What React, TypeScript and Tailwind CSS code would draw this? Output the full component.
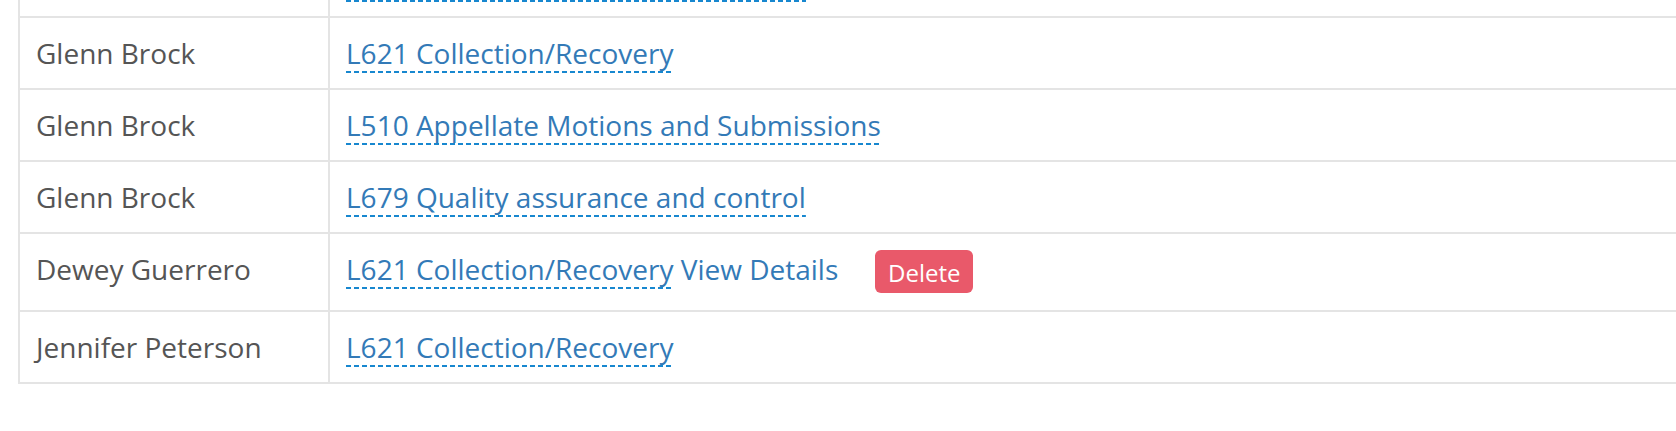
import React from "react";

type Entry = {
    name: string;
    task: string;
    details?: boolean;
};

const entries: Entry[] = [
    { name: "Glenn Brock", task: "L621 Collection/Recovery" },
    { name: "Glenn Brock", task: "L510 Appellate Motions and Submissions" },
    { name: "Glenn Brock", task: "L679 Quality assurance and control" },
    { name: "Dewey Guerrero", task: "L621 Collection/Recovery", details: true },
    { name: "Jennifer Peterson", task: "L621 Collection/Recovery" },
];

const dashes =
    "bg-[image:repeating-linear-gradient(90deg,#1787cf_0px,#1787cf_5px,transparent_5px,transparent_8px)] bg-no-repeat bg-[length:100%_2px]";

const EditableTask: React.FC<{ text: string }> = ({ text }) => (
    <span className={`inline-block leading-[34px] pb-[3px] bg-bottom ${dashes}`}>{text}</span>
);

export const App: React.FC = () => {
    return (
        <div className="w-full h-[431px] overflow-hidden bg-white font-['Open_Sans',sans-serif] text-[28px] leading-[40px]">
            <div className="ml-[18px] w-[1700px] border-l-2 border-[#e4e4e4]">
                {/* tail of the row scrolled above the view: only its underline shows */}
                <div className="flex h-[18px] border-b-2 border-[#e4e4e4]">
                    <div className="w-[310px] shrink-0 border-r-2 border-[#e4e4e4]" />
                    <div className="px-4">
                        <div className={`w-[460px] h-[2px] bg-top ${dashes}`} />
                    </div>
                </div>
                {entries.map((entry, i) => (
                    <div key={i} className={`flex border-b-2 border-[#e4e4e4] ${entry.details ? "h-[78px]" : "h-[72px]"}`}>
                        <div className="w-[310px] shrink-0 border-r-2 border-[#e4e4e4] px-4 pt-[15px] text-[#555555]">
                            {entry.name}
                        </div>
                        <div className="px-4 pt-[15px] text-[#337ab7] whitespace-nowrap">
                            <EditableTask text={entry.task} />
                            {entry.details && (
                                <>
                                    {" "}View Details
                                    <span className="ml-[37px] inline-flex items-center justify-center align-top mt-[1px] pt-[2px] h-[43px] w-[98px] rounded-[6px] bg-[#e9596a] text-[24px] leading-[32px] text-white">
                                        Delete
                                    </span>
                                </>
                            )}
                        </div>
                    </div>
                ))}
            </div>
        </div>
    );
};

export default App;
